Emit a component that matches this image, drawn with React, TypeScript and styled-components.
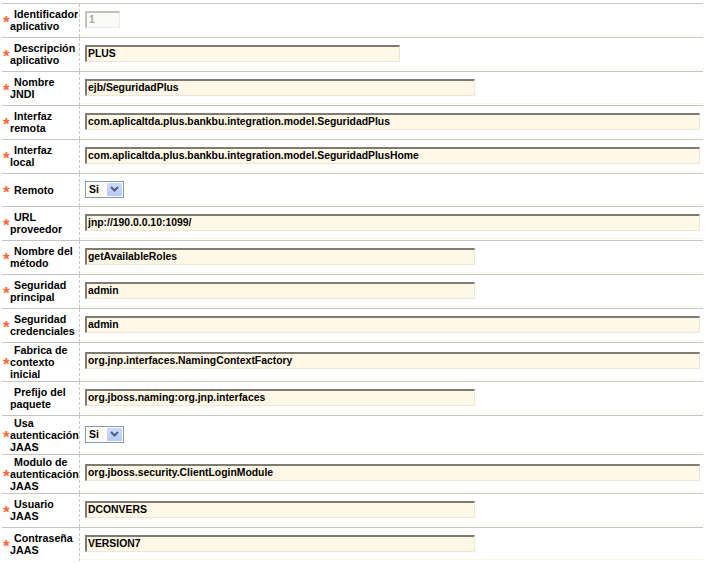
import React from "react";
import styled, { createGlobalStyle } from "styled-components";

const Global = createGlobalStyle`
  html, body { margin: 0; padding: 0; background: #ffffff; }
  body { font-family: "Liberation Sans", Arial, sans-serif; }
`;

const Page = styled.div`
  padding: 3px 2px 0 2px;
  width: 701px;
`;

const Row = styled.div<{ $h: number }>`
  display: grid;
  grid-template-columns: 78px 1fr;
  border-top: 1px solid #c4c4c4;
  height: ${(p) => p.$h - 1}px;
`;

const LabelCell = styled.div`
  display: flex;
  align-items: center;
  padding: 0 0 1px 1px;
  border-right: 1px dashed #c8c8c8;
`;

const Star = styled.span`
  flex: 0 0 7px;
  width: 7px;
  color: #ff6633;
  font-size: 17px;
  font-weight: bold;
  line-height: 8px;
  height: 6px;
  overflow: visible;
  padding-top: 4px;
`;

const LabelText = styled.div`
  flex: 1;
  font-size: 10.7px;
  font-weight: bold;
  line-height: 12px;
  color: #000;
  text-indent: 4px;
  white-space: nowrap;
`;

const ValueCell = styled.div`
  display: flex;
  align-items: center;
  padding-left: 5px;
  border-bottom: 1px solid #fbf6ea;
  margin-bottom: 1px;
`;

const TextInput = styled.div<{ $w: number }>`
  box-sizing: border-box;
  width: ${(p) => p.$w}px;
  height: 17px;
  background: #fff8e6;
  border-top: 2px solid #7d7b72;
  border-left: 2px solid #7d7b72;
  border-right: 1px solid #ebe7d8;
  border-bottom: 1px solid #ebe7d8;
  font-size: 10.4px;
  font-weight: bold;
  line-height: 14px;
  color: #000;
  padding-left: 1px;
  white-space: nowrap;
  overflow: hidden;
  margin-top: -1px;
`;

const DisabledInput = styled.div`
  box-sizing: border-box;
  width: 35px;
  height: 17px;
  background: #fafaf8;
  border-top: 2px solid #c2c2bc;
  border-left: 2px solid #c2c2bc;
  border-right: 1px solid #ecebe6;
  border-bottom: 1px solid #ecebe6;
  font-size: 10.4px;
  font-weight: bold;
  line-height: 14px;
  color: #a8a8a0;
  padding-left: 2px;
  margin-top: -1px;
`;

const Select = styled.div`
  box-sizing: border-box;
  width: 39px;
  height: 17px;
  border: 1px solid #7f9db9;
  background: #fffbf0;
  display: flex;
  align-items: center;
  padding: 1px;
`;

const SelectValue = styled.span`
  flex: 1;
  font-size: 10.4px;
  font-weight: bold;
  color: #000;
  padding-left: 2px;
  line-height: 13px;
`;

const SelectButton = styled.span`
  width: 15px;
  height: 13px;
  background: linear-gradient(#cddafd, #b7c9f7);
  border-radius: 1px;
  display: flex;
  align-items: center;
  justify-content: center;
`;

type Field =
  | { kind: "disabled"; value: string }
  | { kind: "text"; value: string; width: number }
  | { kind: "select"; value: string };

type Item = { lines: string[]; required: boolean; field: Field };

const SHORT = 315;
const MID = 390;
const LONG = 615;

const items: Item[] = [
  { lines: ["Identificador", "aplicativo"], required: true, field: { kind: "disabled", value: "1" } },
  { lines: ["Descripción", "aplicativo"], required: true, field: { kind: "text", value: "PLUS", width: SHORT } },
  { lines: ["Nombre", "JNDI"], required: true, field: { kind: "text", value: "ejb/SeguridadPlus", width: MID } },
  {
    lines: ["Interfaz", "remota"],
    required: true,
    field: { kind: "text", value: "com.aplicaltda.plus.bankbu.integration.model.SeguridadPlus", width: LONG },
  },
  {
    lines: ["Interfaz", "local"],
    required: true,
    field: { kind: "text", value: "com.aplicaltda.plus.bankbu.integration.model.SeguridadPlusHome", width: LONG },
  },
  { lines: ["Remoto"], required: true, field: { kind: "select", value: "Si" } },
  { lines: ["URL", "proveedor"], required: true, field: { kind: "text", value: "jnp://190.0.0.10:1099/", width: LONG } },
  { lines: ["Nombre del", "método"], required: true, field: { kind: "text", value: "getAvailableRoles", width: MID } },
  { lines: ["Seguridad", "principal"], required: true, field: { kind: "text", value: "admin", width: MID } },
  { lines: ["Seguridad", "credenciales"], required: true, field: { kind: "text", value: "admin", width: LONG } },
  {
    lines: ["Fabrica de", "contexto", "inicial"],
    required: true,
    field: { kind: "text", value: "org.jnp.interfaces.NamingContextFactory", width: LONG },
  },
  {
    lines: ["Prefijo del", "paquete"],
    required: false,
    field: { kind: "text", value: "org.jboss.naming:org.jnp.interfaces", width: MID },
  },
  { lines: ["Usa", "autenticación", "JAAS"], required: true, field: { kind: "select", value: "Si" } },
  {
    lines: ["Modulo de", "autenticación", "JAAS"],
    required: true,
    field: { kind: "text", value: "org.jboss.security.ClientLoginModule", width: LONG },
  },
  { lines: ["Usuario", "JAAS"], required: true, field: { kind: "text", value: "DCONVERS", width: MID } },
  { lines: ["Contraseña", "JAAS"], required: true, field: { kind: "text", value: "VERSION7", width: MID } },
];

const rowHeight = (n: number) => (n >= 3 ? 39 : n === 1 ? 33 : 34);

const Chevron = () => (
  <svg width="9" height="6" viewBox="0 0 9 6">
    <path d="M1 1 L4.5 4.5 L8 1" fill="none" stroke="#4d6185" strokeWidth="2" />
  </svg>
);

const renderField = (f: Field) => {
  if (f.kind === "disabled") return <DisabledInput>{f.value}</DisabledInput>;
  if (f.kind === "select")
    return (
      <Select>
        <SelectValue>{f.value}</SelectValue>
        <SelectButton>
          <Chevron />
        </SelectButton>
      </Select>
    );
  return <TextInput $w={f.width}>{f.value}</TextInput>;
};

export default function App() {
  return (
    <>
      <Global />
      <Page>
        {items.map((it, i) => (
          <Row key={i} $h={rowHeight(it.lines.length)}>
            <LabelCell>
              <Star>{it.required ? "*" : ""}</Star>
              <LabelText>
                {it.lines.map((l, j) => (
                  <React.Fragment key={j}>
                    {j > 0 && <br />}
                    {l}
                  </React.Fragment>
                ))}
              </LabelText>
            </LabelCell>
            <ValueCell>{renderField(it.field)}</ValueCell>
          </Row>
        ))}
      </Page>
    </>
  );
}
